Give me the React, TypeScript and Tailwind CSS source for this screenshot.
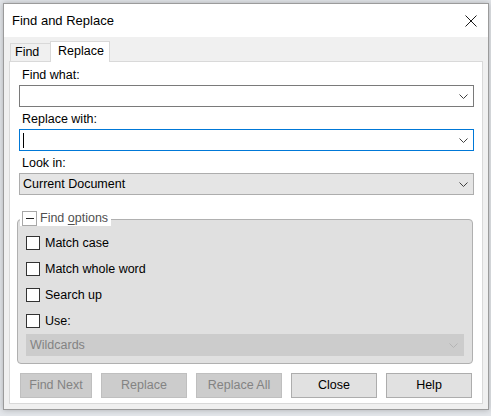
import React from 'react';

const font = { fontFamily: '"Liberation Sans", Arial, sans-serif' };

const Chevron = ({ color = '#404040' }: { color?: string }) => (
  <svg width="9" height="5" viewBox="0 0 9 5" fill="none" className="shrink-0">
    <polyline points="0.5,0.5 4.5,4.5 8.5,0.5" stroke={color} strokeWidth="1" />
  </svg>
);

interface ComboProps {
  value?: string;
  variant: 'plain' | 'focused' | 'select' | 'disabled';
}

const Combo = ({ value, variant }: ComboProps) => {
  const styles = {
    plain: 'bg-white border-[#7a7a7a]',
    focused: 'bg-white border-[#0078d7]',
    select: 'bg-[#e5e5e5] border-[#adadad]',
    disabled: 'bg-[#cccccc] border-[#cccccc]',
  }[variant];
  return (
    <div className={`h-[22px] border flex items-center pl-[3px] pr-[5px] ${styles}`}>
      <div className="flex-1 flex items-center">
        {variant === 'focused' && <div className="w-px h-[15px] bg-black" />}
        {value && (
          <span className={`text-[12.5px] leading-none ${variant === 'disabled' ? 'text-[#838383]' : 'text-black'}`}>
            {value}
          </span>
        )}
      </div>
      <Chevron color={variant === 'disabled' ? '#b4b4b4' : '#404040'} />
    </div>
  );
};

const Label = ({ text, className = '' }: { text: string; className?: string }) => (
  <div className={`h-[16px] leading-[16px] text-[12.5px] text-black pl-[3px] ${className}`}>{text}</div>
);

const Check = ({ label }: { label: string }) => (
  <div className="h-[26px] flex items-center">
    <div className="w-[14px] h-[14px] border border-[#333333] bg-white" />
    <span className="ml-[5px] text-[12.5px] text-black">{label}</span>
  </div>
);

const Button = ({ label, disabled, width }: { label: string; disabled?: boolean; width: string }) => (
  <div
    className={`${width} h-[25px] border flex items-center justify-center text-[12.5px] ${
      disabled ? 'bg-[#cccccc] border-[#bfbfbf] text-[#838383]' : 'bg-[#e1e1e1] border-[#adadad] text-black'
    }`}
  >
    {label}
  </div>
);

export default function App() {
  return (
    <div className="w-[491px] h-[416px] bg-[#e3e6ea] overflow-hidden pt-[3px] pl-[3px]" style={font}>
      <div className="w-[486px] h-[407px] border border-[#9b9b9b] bg-[#f0f0f0] flex flex-col shadow-[0_0_6px_rgba(0,0,0,0.25)]">
        {/* title bar */}
        <div className="h-[33px] bg-white flex items-center justify-between pl-[8px] pr-[11px]">
          <span className="text-[13px] text-black">Find and Replace</span>
          <svg width="12" height="12" viewBox="0 0 12 12" fill="none">
            <line x1="0.5" y1="0.5" x2="11.5" y2="11.5" stroke="#1a1a1a" strokeWidth="1" />
            <line x1="11.5" y1="0.5" x2="0.5" y2="11.5" stroke="#1a1a1a" strokeWidth="1" />
          </svg>
        </div>

        {/* tabs */}
        <div className="h-[24px] flex items-end pl-[6px]">
          <div className="h-[18px] w-[40px] border-t border-l border-[#d9d9d9] bg-[#f0f0f0] flex items-center pl-[4px] text-[12.5px] text-black">
            Find
          </div>
          <div className="relative z-10 h-[21px] w-[60px] -mb-px border-t border-l border-r border-[#d9d9d9] bg-white flex items-center pl-[7px] pb-[2px] text-[12.5px] text-black">
            Replace
          </div>
        </div>

        {/* tab panel */}
        <div className="ml-[5px] w-[474px] h-[343px] border border-[#d9d9d9] bg-white flex flex-col pl-[9px] pr-[8px]">
          <Label text="Find what:" className="mt-[5px]" />
          <div className="mt-[2px]">
            <Combo variant="plain" />
          </div>
          <Label text="Replace with:" className="mt-[4px]" />
          <div className="mt-[2px]">
            <Combo variant="focused" />
          </div>
          <Label text="Look in:" className="mt-[4px]" />
          <div className="mt-[2px]">
            <Combo variant="select" value="Current Document" />
          </div>

          {/* find options group */}
          <div className="relative mt-[24px] -ml-[2px] w-[456px] h-[145px] border border-[#b0b0b0] rounded-[4px] bg-[#e0e0e0] pt-[10px] pl-[8px] pr-[8px]">
            <div className="absolute -top-[10px] left-[2px] h-[16px] bg-white flex items-center pl-[2px] pr-[3px]">
              <div className="w-[15px] h-[15px] border border-[#a8a8a8] bg-white flex items-center justify-center">
                <div className="w-[8px] h-px bg-[#222222]" />
              </div>
              <span className="ml-[3px] text-[12.5px] text-[#505050]">
                Find <span className="underline underline-offset-2">o</span>ptions
              </span>
            </div>
            <Check label="Match case" />
            <Check label="Match whole word" />
            <Check label="Search up" />
            <Check label="Use:" />
            <Combo variant="disabled" value="Wildcards" />
          </div>

          {/* buttons */}
          <div className="mt-[9px] pl-[1px] flex gap-[9px]">
            <Button label="Find Next" disabled width="w-[72px]" />
            <Button label="Replace" disabled width="w-[86px]" />
            <Button label="Replace All" disabled width="w-[86px]" />
            <Button label="Close" width="w-[86px]" />
            <Button label="Help" width="w-[86px]" />
          </div>
        </div>
      </div>
    </div>
  );
}
